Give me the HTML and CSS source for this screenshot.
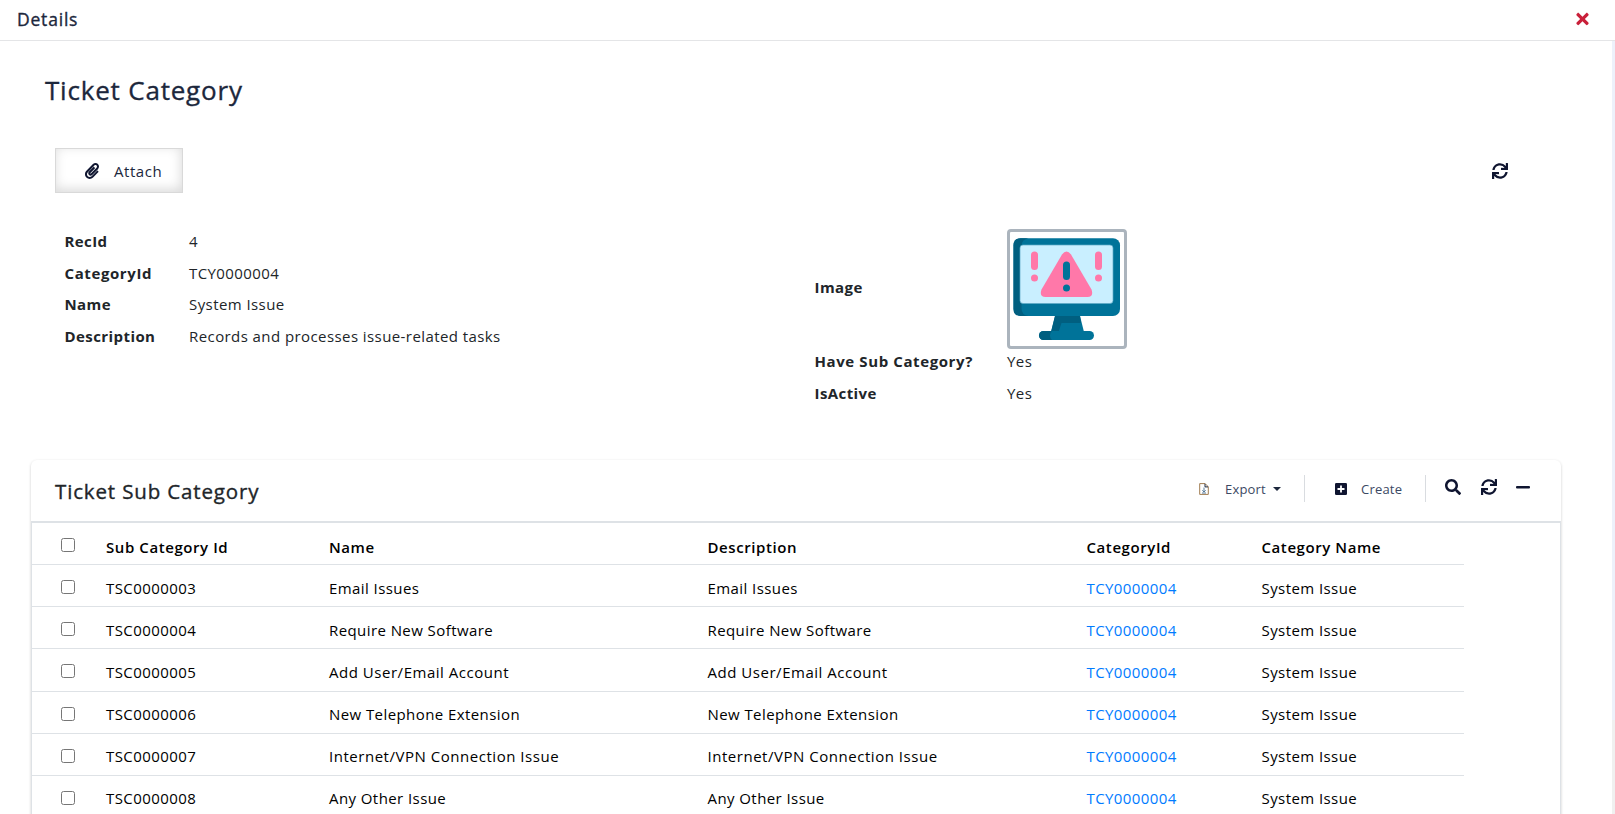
FILE: index.html
```html
<!DOCTYPE html>
<html lang="en">
<head>
<meta charset="utf-8">
<title>Ticket Category</title>
<link rel="stylesheet" href="styles.css">
</head>
<body>
<svg class="defs" width="0" height="0">
  <symbol id="sync" viewBox="0 0 512 512"><path d="M440.65 12.57l4 82.77A247.16 247.16 0 0 0 255.83 8C134.73 8 33.91 94.92 12.29 209.82A12 12 0 0 0 24.09 224h49.05a12 12 0 0 0 11.67-9.26 175.91 175.91 0 0 1 317-56.94l-101.46-4.86a12 12 0 0 0-12.57 12v47.41a12 12 0 0 0 12 12H500a12 12 0 0 0 12-12V12a12 12 0 0 0-12-12h-47.37a12 12 0 0 0-11.98 12.57zM255.83 432a175.61 175.61 0 0 1-146-77.8l101.8 4.87a12 12 0 0 0 12.57-12v-47.4a12 12 0 0 0-12-12H12a12 12 0 0 0-12 12V500a12 12 0 0 0 12 12h47.35a12 12 0 0 0 12-12.6l-4.15-82.57A247.17 247.17 0 0 0 255.83 504c121.11 0 221.93-86.92 243.55-201.82a12 12 0 0 0-11.8-14.18h-49.05a12 12 0 0 0-11.67 9.26A175.86 175.86 0 0 1 255.83 432z"/></symbol>
</svg>
<header class="topbar">
  <div class="topbar-title">Details</div>
  <svg class="close" viewBox="0 0 352 512"><path d="M242.72 256l100.07-100.07c12.28-12.28 12.28-32.19 0-44.48l-22.24-22.24c-12.28-12.28-32.19-12.28-44.48 0L176 189.28 75.93 89.21c-12.28-12.28-32.19-12.28-44.48 0L9.21 111.45c-12.28 12.28-12.28 32.19 0 44.48L109.28 256 9.21 356.07c-12.28 12.28-12.28 32.19 0 44.48l22.24 22.24c12.28 12.28 32.2 12.28 44.48 0L176 322.72l100.07 100.07c12.28 12.28 32.2 12.28 44.48 0l22.24-22.24c12.28-12.28 12.28-32.19 0-44.48L242.72 256z"/></svg>
</header>
<div class="body">
<main class="content">
  <h1 class="title">Ticket Category</h1>
  <div class="actions">
    <button class="attach"><svg class="clip" viewBox="0 0 448 512"><path d="M43.246 466.142c-58.43-60.289-57.341-157.511 1.386-217.581L254.392 34c44.316-45.332 116.351-45.336 160.671 0 43.89 44.894 43.943 117.329 0 162.276L232.214 383.128c-29.855 30.537-78.633 30.111-107.982-.998-28.275-29.97-27.368-77.473 1.452-106.953l143.743-146.835c6.182-6.314 16.312-6.422 22.626-.241l22.861 22.379c6.315 6.182 6.422 16.312.241 22.626L171.427 319.927c-4.932 5.045-5.236 13.428-.648 18.292 4.372 4.634 11.245 4.711 15.688.165l182.849-186.851c19.613-20.062 19.613-52.725-.011-72.798-19.189-19.627-49.957-19.637-69.154 0L90.39 293.295c-34.763 35.56-35.299 93.12-1.191 128.313 34.01 35.093 88.985 35.137 123.058.286l172.06-175.999c6.177-6.319 16.307-6.433 22.626-.256l22.877 22.364c6.319 6.177 6.434 16.307.256 22.626l-172.06 175.998c-59.576 60.938-155.943 60.216-214.77-.485z"/></svg><span>Attach</span></button>
    <svg class="icon"><use href="#sync"/></svg>
  </div>
  <div class="details">
    <dl class="fields fields-left">
      <dt>RecId</dt><dd>4</dd>
      <dt class="wide">CategoryId</dt><dd>TCY0000004</dd>
      <dt>Name</dt><dd>System Issue</dd>
      <dt>Description</dt><dd>Records and processes issue-related tasks</dd>
    </dl>
    <dl class="fields fields-right">
      <dt>Image</dt>
      <dd class="thumb">
        <svg viewBox="0 0 114 114" width="114" height="114">
          <path fill="#007399" d="M45 84h25l4 16H41z"/>
          <path fill="#005f80" d="M45 84h25l1 7H51.500l-3 9H41z"/>
          <rect x="29" y="99" width="55" height="9" rx="4.500" fill="#007399"/>
          <path fill="#005f80" d="M33.500 99H42q-2 2-2 4.500t2 4.500h-8.500a4.500 4.500 0 0 1 0-9z"/>
          <rect x="3.500" y="6.300" width="106.500" height="77.700" rx="7" fill="#007399"/>
          <path fill="#005f80" d="M10.500 6.300h8q-7 1-7 8v62q0 7 7 7.700h-8q-7 0-7-7V13.300q0-7 7-7z"/>
          <rect x="10" y="13" width="93" height="58.500" rx="3" fill="#c9efff" stroke="#5daac5" stroke-width=".7"/>
          <path fill="#ff78a9" d="M52 22.500q4.500-6 9 0l20.500 35q2.500 7-4 7.500H35.500q-6.500-.5-4-7.500z"/>
          <rect x="53" y="29.500" width="7" height="18.500" rx="3.500" fill="#007399"/>
          <circle cx="56.500" cy="56" r="3.500" fill="#007399"/>
          <rect x="21" y="19.500" width="7" height="18.500" rx="3.500" fill="#ff78a9"/>
          <circle cx="24.500" cy="46" r="3.500" fill="#ff78a9"/>
          <rect x="85" y="19.500" width="7" height="18.500" rx="3.500" fill="#ff78a9"/>
          <circle cx="88.500" cy="46" r="3.500" fill="#ff78a9"/>
        </svg>
      </dd>
      <dt class="wide">Have Sub Category?</dt><dd>Yes</dd>
      <dt>IsActive</dt><dd>Yes</dd>
    </dl>
  </div>
  <section class="card">
    <div class="card-head">
      <h2 class="card-title">Ticket Sub Category</h2>
      <div class="tools">
        <div class="tool export">
          <svg class="file" viewBox="0 0 10 12"><path d="M.7.6h5.400L9.300 3.800v7.600H.7z" fill="none" stroke="#a07c50"/><path d="M6 .8v3.100h3" fill="none" stroke="#1c273c"/><path d="M5 4.500v4.500M3.300 7.300L5 9l1.700-1.700M3 10h4" fill="none" stroke="#4b6f92" stroke-width=".9"/></svg>
          <span>Export</span><i class="caret"></i>
        </div>
        <div class="tool create">
          <svg class="plus" viewBox="0 0 12 12"><rect width="12" height="12" rx="1.300"/><path d="M6 2.500v7M2.500 6h7" stroke="#fff" stroke-width="1.800"/></svg>
          <span>Create</span>
        </div>
        <div class="icons">
          <svg class="icon" viewBox="0 0 512 512"><path d="M505 442.700L405.300 343c-4.500-4.500-10.600-7-17-7H372c27.600-35.300 44-79.700 44-128C416 93.100 322.900 0 208 0S0 93.100 0 208s93.100 208 208 208c48.300 0 92.700-16.400 128-44v16.300c0 6.400 2.500 12.500 7 17l99.700 99.700c9.400 9.400 24.600 9.400 33.900 0l28.300-28.300c9.400-9.400 9.400-24.600.1-34zM208 336c-70.700 0-128-57.200-128-128 0-70.700 57.200-128 128-128 70.700 0 128 57.200 128 128 0 70.700-57.200 128-128 128z"/></svg>
          <svg class="icon"><use href="#sync"/></svg>
          <svg class="minus" viewBox="0 0 14 16"><rect y="7" width="14" height="2.600" rx="1"/></svg>
        </div>
      </div>
    </div>
    <div class="grid">
      <div class="row head"><input type="checkbox"><span>Sub Category Id</span><span>Name</span><span>Description</span><span>CategoryId</span><span>Category Name</span></div>
      <div class="row"><input type="checkbox"><span>TSC0000003</span><span>Email Issues</span><span>Email Issues</span><a>TCY0000004</a><span>System Issue</span></div>
      <div class="row"><input type="checkbox"><span>TSC0000004</span><span>Require New Software</span><span>Require New Software</span><a>TCY0000004</a><span>System Issue</span></div>
      <div class="row"><input type="checkbox"><span>TSC0000005</span><span class="wide">Add User/Email Account</span><span class="wide">Add User/Email Account</span><a>TCY0000004</a><span>System Issue</span></div>
      <div class="row"><input type="checkbox"><span>TSC0000006</span><span>New Telephone Extension</span><span>New Telephone Extension</span><a>TCY0000004</a><span>System Issue</span></div>
      <div class="row"><input type="checkbox"><span>TSC0000007</span><span class="wide">Internet/VPN Connection Issue</span><span class="wide">Internet/VPN Connection Issue</span><a>TCY0000004</a><span>System Issue</span></div>
      <div class="row"><input type="checkbox"><span>TSC0000008</span><span>Any Other Issue</span><span>Any Other Issue</span><a>TCY0000004</a><span>System Issue</span></div>
    </div>
  </section>
</main>
<div class="scroll"><div class="scroll-thumb"></div></div>
</div>
</body>
</html>
```
FILE: styles.css
```css
* { box-sizing: border-box; }
body {
  margin: 0;
  height: 814px;
  overflow: hidden;
  background: #fff;
  color: #212529;
  font: 15px/22px "Segoe UI", "Open Sans", sans-serif;
  letter-spacing: .42px;
}
svg { display: block; flex: none; fill: #0f1530; }
.defs { position: absolute; }
.topbar {
  height: 41px;
  padding: 0 26px 2px 17px;
  border-bottom: 1px solid #e4e5e7;
  display: flex;
  align-items: center;
  justify-content: space-between;
}
.topbar-title, .title, .card-title { -webkit-text-stroke: .35px currentColor; font-weight: 400; }
.topbar-title { font-size: 17.500px; letter-spacing: .8px; color: #1c273c; }
.topbar .close { width: 13px; height: 18px; fill: #c9203a; }
.body { display: flex; height: 773px; }
.content { flex: 1; padding: 30px 51px 0 31px; overflow: hidden; }
.scroll { width: 3px; background: #f0f0f0; }
.scroll-thumb { height: 679px; background: #edf1fb; }
.title {
  margin: 0 0 0 14px;
  font-size: 26px;
  line-height: 38px;
  letter-spacing: .8px;
  color: #1c273c;
}
.actions {
  display: flex;
  justify-content: space-between;
  margin: 39px 53px 0 24px;
}
.actions .icon { margin-top: 15px; }
.icon { width: 16px; height: 16px; }
.attach {
  width: 128px;
  height: 45px;
  padding: 1px 0 0 29px;
  display: flex;
  align-items: center;
  gap: 15px;
  background: #fff;
  border: 1px solid #d9d9d9;
  box-shadow: inset -1px -3px 12px 0 #dadada;
  font: inherit;
  letter-spacing: .55px;
  color: #1c273c;
}
.clip { width: 14px; height: 16px; margin-top: -1px; }
.details { display: flex; height: 267px; padding: 36px 0 0 34px; }
.fields { margin: 0; display: grid; align-content: start; }
.fields dt { font-weight: 700; margin-left: -.5px; }
.fields dd { margin: 0; }
.fields-left { width: 750px; grid-template-columns: 124px 1fr; grid-auto-rows: 31.670px; padding-top: 1px; }
.fields-right { grid-template-columns: 192px 1fr; grid-template-rows: 120px 32px 32px; }
.fields-right dt:first-child { align-self: center; margin-top: -4px; }
.fields-right dt:nth-of-type(n+2), .fields-right dd:nth-of-type(n+2) { padding-top: 1px; }
.thumb { width: 120px; height: 120px; border: 3px solid #abb4bd; border-radius: 4px; }
.fields dt.wide { letter-spacing: .6px; }
.row > .wide { letter-spacing: .53px; }
.card {
  height: 400px;
  border-radius: 6px;
  box-shadow: 0 1px 3px rgba(0, 0, 0, .2);
}
.card-head {
  height: 61px;
  padding: 0 31px 0 24px;
  display: flex;
  justify-content: space-between;
}
.card-title { margin: 16px 0 0; font-size: 20.500px; line-height: 30px; letter-spacing: .85px; }
.tools { display: flex; padding-top: 15px; font-size: 13px; letter-spacing: .2px; color: #3b4863; }
.tool { display: flex; align-items: center; height: 27px; padding-top: 1px; border-right: 1px solid #d9dce0; }
.export { width: 106px; }
.create { width: 121px; padding-left: 30px; }
.file { width: 10px; height: 12px; margin-right: 16px; margin-top: -1px; }
.plus { width: 12px; height: 12px; margin-right: 14px; margin-top: -1px; }
.caret { margin: -1px 0 0 7px; border: 4px solid transparent; border-top-color: #1c273c; border-bottom: 0; }
.icons { display: flex; gap: 20px; padding: 4px 0 0 19px; }
.minus { width: 14px; height: 16px; margin-left: -1px; }
.grid {
  height: 340px;
  border: 1px solid #dee2e6;
  border-top-width: 2px;
  color: #000;
}
.row {
  width: 1432px;
  height: 42.200px;
  padding-left: 29px;
  border-bottom: 1px solid #dee2e6;
  display: grid;
  grid-template-columns: 45px 223px 378.500px 379px 175px 1fr;
  align-items: center;
}
.row > span, .row > a { padding-top: 3.850px; }
.row a { color: #007bff; }
.row input { width: 14px; height: 14px; margin: 3px 0 0; }
.row.head { height: 42px; font-weight: 600; letter-spacing: .58px; }
.row.head input { margin-top: 2px; }
.row.head span { padding-top: 7px; }
```
